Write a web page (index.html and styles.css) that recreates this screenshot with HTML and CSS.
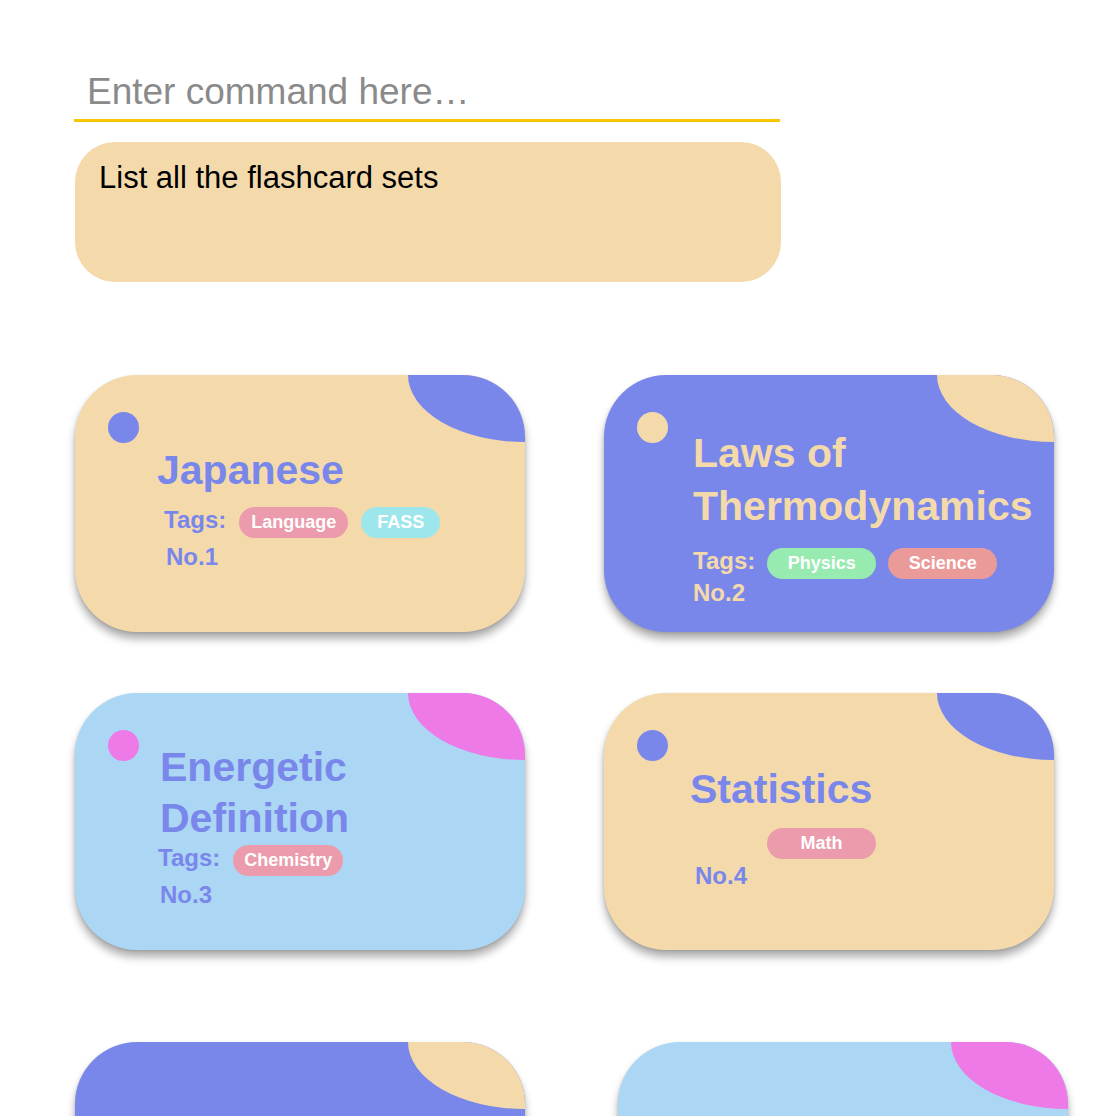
FILE: index.html
```html
<!DOCTYPE html>
<html lang="en">
<head>
<meta charset="utf-8">
<title>Flashcard sets</title>
<link rel="stylesheet" href="styles.css">
</head>
<body>
<main class="page">
  <div class="command">
    <input class="command__input" type="text" placeholder="Enter command here…">
  </div>
  <div class="result">List all the flashcard sets</div>

  <section class="deck">
    <article class="card card--cream card--c1">
      <span class="card__blob card__blob--blue"></span>
      <span class="card__dot card__dot--blue"></span>
      <h2 class="card__title">Japanese</h2>
      <div class="card__tags">
        <span class="card__label">Tags:</span>
        <span class="pill pill--pink">Language</span>
        <span class="pill pill--cyan pill--short">FASS</span>
      </div>
      <div class="card__no">No.1</div>
    </article>

    <article class="card card--blue card--c2">
      <span class="card__blob card__blob--cream"></span>
      <span class="card__dot card__dot--cream"></span>
      <h2 class="card__title">Laws of Thermodynamics</h2>
      <div class="card__tags">
        <span class="card__label">Tags:</span>
        <span class="pill pill--green">Physics</span>
        <span class="pill pill--salmon">Science</span>
      </div>
      <div class="card__no">No.2</div>
    </article>

    <article class="card card--sky card--c3">
      <span class="card__blob card__blob--magenta"></span>
      <span class="card__dot card__dot--magenta"></span>
      <h2 class="card__title">Energetic Definition</h2>
      <div class="card__tags">
        <span class="card__label">Tags:</span>
        <span class="pill pill--pink">Chemistry</span>
      </div>
      <div class="card__no">No.3</div>
    </article>

    <article class="card card--cream card--c4">
      <span class="card__blob card__blob--blue"></span>
      <span class="card__dot card__dot--blue"></span>
      <h2 class="card__title">Statistics</h2>
      <div class="card__tags">
        <span class="pill pill--pink">Math</span>
      </div>
      <div class="card__no">No.4</div>
    </article>

    <article class="card card--blue card--c5">
      <span class="card__blob card__blob--cream"></span>
    </article>

    <article class="card card--sky card--c6">
      <span class="card__blob card__blob--magenta"></span>
    </article>
  </section>
</main>
</body>
</html>
```

FILE: styles.css
```css
html, body {
  margin: 0;
  padding: 0;
  background: #ffffff;
}

body {
  font-family: "Liberation Sans", Arial, Helvetica, sans-serif;
  overflow: hidden;
}

.page {
  padding: 71px 0 0 75px;
}

/* command input */
.command__input {
  display: block;
  box-sizing: content-box;
  width: 693px;
  height: 42px;
  margin: 0 0 0 -1px;
  padding: 0 0 6px 13px;
  border: none;
  border-bottom: 3px solid #f7c600;
  outline: none;
  background: transparent;
  font-family: "Liberation Sans", Arial, sans-serif;
  font-size: 37px;
  line-height: 42px;
  color: #222;
}

.command__input::placeholder {
  color: #8a8a8a;
}

/* result box */
.result {
  box-sizing: border-box;
  width: 706px;
  height: 140px;
  margin-top: 20px;
  padding: 18px 24px;
  border-radius: 40px;
  background: #f4daab;
  color: #000;
  font-size: 31px;
  line-height: 36px;
}

/* cards */
.deck {
  display: grid;
  grid-template-columns: 450px 450px;
  column-gap: 79px;
  row-gap: 61px;
  margin-top: 93px;
}

.card {
  position: relative;
  overflow: hidden;
  box-sizing: border-box;
  width: 450px;
  height: 257px;
  border-radius: 62px;
  box-shadow: 0 7px 9px rgba(0, 0, 0, 0.32), 0 1px 3px rgba(0, 0, 0, 0.12);
}

.card--cream { background: #f4daab; color: #7987eb; }
.card--blue  { background: #7987eb; color: #f4daab; }
.card--sky   { background: #abd6f4; color: #7987eb; }

.card__blob {
  position: absolute;
  top: -67px;
  right: -117px;
  width: 234px;
  height: 134px;
  border-radius: 50%;
}

.card__dot {
  position: absolute;
  top: 37px;
  left: 33px;
  width: 31px;
  height: 31px;
  border-radius: 50%;
}

.card__blob--blue, .card__dot--blue { background: #7987eb; }
.card__blob--cream, .card__dot--cream { background: #f4daab; }
.card__blob--magenta, .card__dot--magenta { background: #ee7ae7; }

.card__title {
  position: relative;
  margin: 0;
  font-size: 41px;
  line-height: 52px;
  font-weight: bold;
}

.card__tags {
  display: flex;
  align-items: baseline;
  gap: 13px;
}

.card__label {
  font-size: 24px;
  line-height: 28px;
  font-weight: bold;
}

.card__no {
  font-size: 24px;
  line-height: 28px;
  font-weight: bold;
}

.pill {
  display: inline-block;
  box-sizing: border-box;
  min-width: 109px;
  height: 31px;
  padding: 0 11px;
  border-radius: 16px;
  color: #ffffff;
  font-size: 18px;
  line-height: 31px;
  font-weight: bold;
  text-align: center;
}

.pill--short { min-width: 0; padding: 0 16px; }
.pill--pink { background: #eb9bab; }
.pill--cyan { background: #9de7ec; }
.pill--green { background: #98ebb0; }
.pill--salmon { background: #eb9a9a; }

/* per-card placement */
.card--c1 { padding: 69px 20px 0 82px; }
.card--c1 .card__tags { margin: 10px 0 0 7px; }
.card--c1 .card__no { margin: 5px 0 0 9px; }

.card--c2 { padding: 52px 12px 0 89px; }
.card--c2 .card__title { line-height: 53px; }
.card--c2 .card__tags { margin-top: 14px; gap: 12px; }
.card--c2 .card__no { margin-top: 0; }

.card--c3 { padding: 49px 20px 0 85px; }
.card--c3 .card__title { line-height: 51px; }
.card--c3 .card__tags { margin: 0 0 0 -2px; }
.card--c3 .card__no { margin-top: 5px; }

.card--c4 { padding: 70px 20px 0 86px; }
.card--c4 .card__tags { margin: 13px 0 0 77px; }
.card--c4 .card__no { margin: 3px 0 0 5px; }

.card--c5 { margin-top: 31px; }
.card--c6 { margin: 31px 0 0 14px; }
```
